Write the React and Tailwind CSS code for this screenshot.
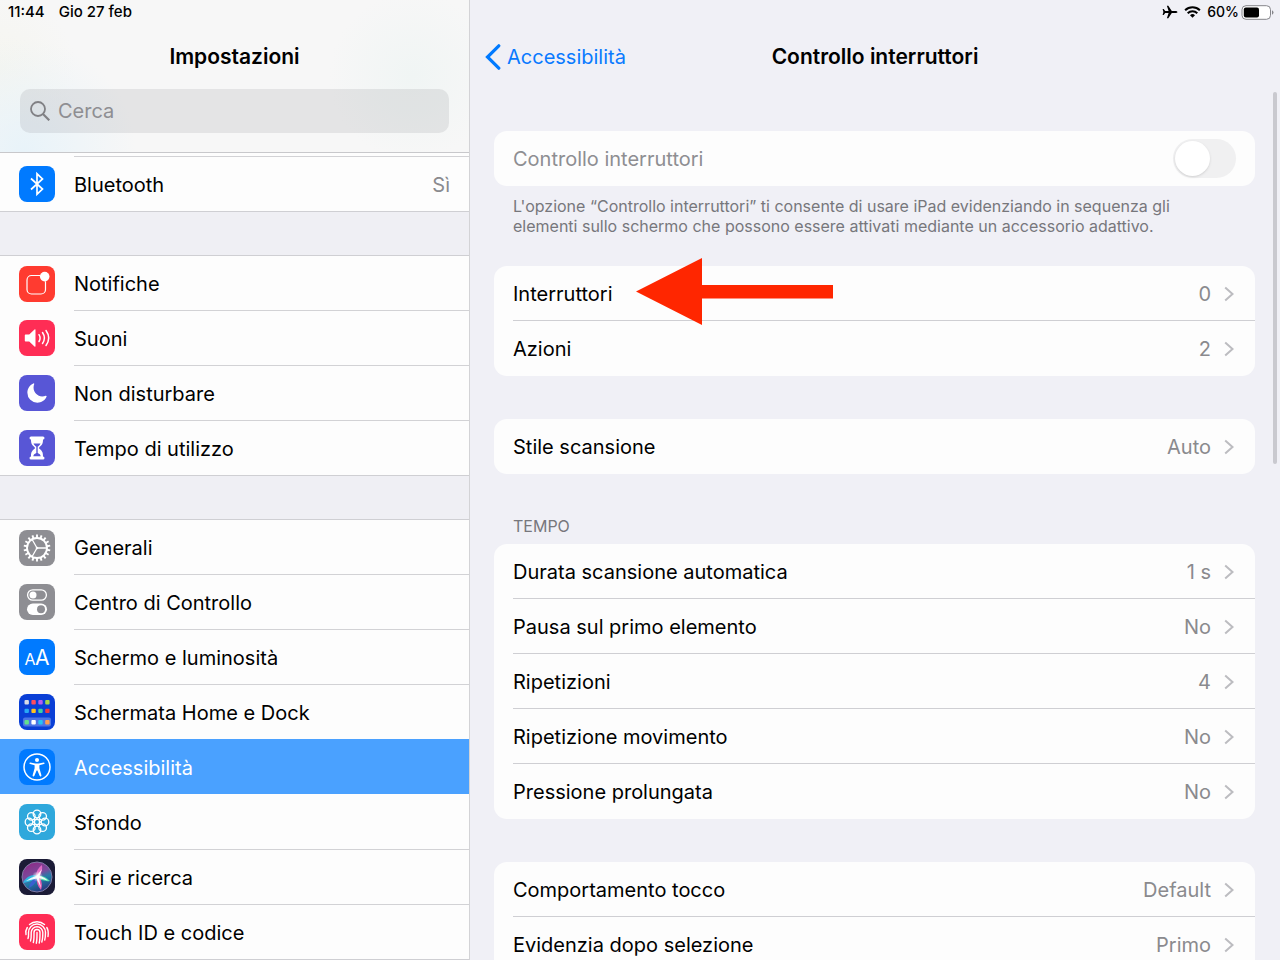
import { IoMoon } from 'react-icons/io5'

const gearTeeth = Array.from({ length: 18 }, (_, i) => i * 20)
const petals = Array.from({ length: 8 }, (_, i) => (i * Math.PI) / 4)

function Tile({ className, children }) {
    return (
        <svg viewBox="0 0 36 36" className={`size-9 shrink-0 rounded-lg ${className}`} aria-hidden="true">
            {children}
        </svg>
    )
}

function BluetoothIcon() {
    return (
        <Tile className="bg-[#007aff]">
            <path d="M12 12.5 23.5 23 18 28.2V7.8L23.5 13 12 23.5" fill="none" stroke="#fff" strokeWidth="1.7" />
        </Tile>
    )
}

function NotificationsIcon() {
    return (
        <Tile className="bg-[#ff3b30]">
            <path
                d="M21.3 9.5H12.5A4.5 4.5 0 0 0 8 14v9.5A4.5 4.5 0 0 0 12.5 28H22a4.5 4.5 0 0 0 4.5-4.5v-8.3"
                fill="none"
                stroke="#fff"
                strokeWidth="1.2"
            />
            <circle cx="25.7" cy="10.6" r="4.8" fill="#fff" />
        </Tile>
    )
}

function SoundsIcon() {
    return (
        <Tile className="bg-[#ff2d55]">
            <path d="M6.5 14.5h3.7l5.3-5q1-.8 1 .5v16q0 1.3-1 .5l-5.3-5H6.5q-.7 0-.7-.8v-5.4q0-.8.7-.8z" fill="#fff" />
            <g fill="none" stroke="#fff" strokeWidth="1.5" strokeLinecap="round">
                <path d="M20 14.700q2.200 3.400 0 6.800" />
                <path d="M23.500 12.500q3.800 5.500 0 11" />
                <path d="M27 10.500q5.400 7.500 0 15" />
            </g>
        </Tile>
    )
}

function DoNotDisturbIcon() {
    return (
        <Tile className="bg-[#5856d6]">
            <IoMoon x="7" y="7" size={22} color="#fff" />
        </Tile>
    )
}

function ScreenTimeIcon() {
    return (
        <Tile className="bg-[#5856d6]">
            <path
                d="M12 6.5h12q1.5 0 1.5 1.5t-1.5 1.6c0 4-.7 5.4-3.6 7.7q-.8.7 0 1.4c2.9 2.3 3.6 3.7 3.6 7.7q1.5.1 1.5 1.6t-1.5 1.5H12q-1.500 0-1.500-1.500t1.500-1.600c0-4 .7-5.400 3.600-7.700q.8-.7 0-1.400C12.700 15 12 13.600 12 9.600q-1.500-.1-1.500-1.600T12 6.500z"
                fill="#fff"
            />
            <path d="M14.500 13.500h7c-.6 1.400-1.500 2-2.800 3.200v6.300c2 .9 2.600 1.500 3 3.200h-7.400c.4-1.700 1-2.300 3-3.200v-6.300c-1.300-1.200-2.200-1.800-2.800-3.200z" fill="#5856d6" />
        </Tile>
    )
}

function GeneralIcon() {
    return (
        <Tile className="bg-[#8e8e93]">
            <g stroke="#fff" fill="none">
                {gearTeeth.map((angle) => (
                    <path key={angle} d="M18 4.600v3.400" strokeWidth="1.9" transform={`rotate(${angle} 18 18)`} />
                ))}
                <circle cx="18" cy="18" r="10" strokeWidth="1.9" />
                <path d="M18 18h10M18 18l-5-8.700M18 18l-5 8.700" strokeWidth="1.3" />
            </g>
            <circle cx="18" cy="18" r="1.3" fill="#fff" />
        </Tile>
    )
}

function ControlCenterIcon() {
    return (
        <Tile className="bg-[#8e8e93]">
            <rect x="8.6" y="5.8" width="18.8" height="10.4" rx="5.2" fill="none" stroke="#fff" strokeWidth="1.3" />
            <circle cx="14" cy="11" r="3.5" fill="#fff" />
            <rect x="8" y="19.5" width="20" height="11.5" rx="5.75" fill="#fff" />
            <circle cx="22" cy="25.2" r="4" fill="#8e8e93" />
        </Tile>
    )
}

function DisplayIcon() {
    return (
        <Tile className="bg-[#007aff]">
            <text x="5.5" y="25.5" fontSize="16" fill="#fff" className="font-[Inter]">A</text>
            <text x="16" y="25.5" fontSize="21" fill="#fff" className="font-[Inter]">A</text>
        </Tile>
    )
}

function HomeScreenIcon() {
    const apps = [
        ['#d9dbe6', '#ff4d5e', '#b85cf0', '#a6d84a'],
        ['#28a8f5', '#ffc21f', '#3fd0a0', '#f03a3f'],
        ['#62e08c', '#ffffff', '#27c3f3', '#ff9d50'],
    ]
    return (
        <Tile className="bg-[#0a3fd6]">
            <rect x="4" y="23.5" width="28" height="9" rx="2" fill="#4c74e4" />
            {apps.map((line, row) =>
                line.map((color, col) => (
                    <rect
                        key={color}
                        x={5.5 + col * 6.9}
                        y={[6, 14.7, 26][row]}
                        width="4.4"
                        height="4.4"
                        rx="1"
                        fill={color}
                    />
                ))
            )}
        </Tile>
    )
}

function AccessibilityIcon() {
    return (
        <Tile className="bg-[#007aff]">
            <circle cx="18" cy="18" r="13" fill="none" stroke="#fff" strokeWidth="1.5" />
            <circle cx="18" cy="11" r="2" fill="#fff" />
            <path
                d="M11.3 13.5l5 .9h3.4l5-.9q.9 0 .9.7t-.7.8l-4.5 1.200v3l2 7q.2 1-.6 1.200t-1.200-.7L18.400 21.500h-.8l-2.200 5.200q-.4.900-1.200.7t-.6-1.200l2-7v-3L11.100 15q-.7-.1-.7-.8t.9-.7z"
                fill="#fff"
            />
        </Tile>
    )
}

function WallpaperIcon() {
    return (
        <Tile className="bg-[#2fa8dc]">
            <g fill="none" stroke="#fff" strokeWidth="1.3">
                {petals.map((angle) => (
                    <circle key={angle} cx={18 + 8 * Math.cos(angle)} cy={18 + 8 * Math.sin(angle)} r="3.8" />
                ))}
                {petals.map((angle) => (
                    <path
                        key={angle}
                        d={`M${18 + 2.6 * Math.cos(angle)} ${18 + 2.6 * Math.sin(angle)}L${18 + 4.4 * Math.cos(angle)} ${18 + 4.4 * Math.sin(angle)}`}
                    />
                ))}
                <circle cx="18" cy="18" r="2.6" />
            </g>
        </Tile>
    )
}

function SiriIcon() {
    return (
        <Tile className="bg-[#1b1b36]">
            <defs>
                <linearGradient id="siri" x1="0.3" y1="0" x2="0.7" y2="1">
                    <stop offset="0" stopColor="#8e2a86" />
                    <stop offset="0.4" stopColor="#7a4a9c" />
                    <stop offset="0.6" stopColor="#1f7fa8" />
                    <stop offset="1" stopColor="#27307a" />
                </linearGradient>
                <radialGradient id="glow">
                    <stop offset="0" stopColor="#fff" />
                    <stop offset="1" stopColor="#fff" stopOpacity="0" />
                </radialGradient>
            </defs>
            <circle cx="18" cy="18" r="15" fill="url(#siri)" stroke="#7f7aa6" strokeWidth="1" />
            <path d="M18 16Q8 15 4 24q8-1 14-5z" fill="#2fb6e0" />
            <path d="M18 17q7-1 13 5-6 1-13-3z" fill="#4fe0b0" />
            <path d="M18 18q-1 8 4 13 2-6-1-13z" fill="#e85cb0" />
            <path d="M18 18q-8 5-8 11 6-3 9-10z" fill="#3a5fd0" />
            <path d="M17 18q0-8 6-12 1 6-3 12z" fill="#e06ac4" />
            <circle cx="18.5" cy="17.5" r="5.5" fill="url(#glow)" />
            <path d="M7 22q5-4 10.500-5L23 10l-2.500 7Q26 18 28.500 21.500L20 19l2 10-4.500-9.500z" fill="#fff" opacity=".9" />
        </Tile>
    )
}

function TouchIdIcon() {
    return (
        <Tile className="bg-[#ff2d55]">
            <g fill="none" stroke="#fff" strokeWidth="1.4" strokeLinecap="round">
                <path d="M10.500 10.500a11.500 11.500 0 0 1 15 0" />
                <path d="M7 20.500c-.6-2 0-5 1.300-7M27.800 13.500c1.400 2.200 1.700 5.500 1.200 9" />
                <path d="M9 24.500c.8-1.800.5-4 .5-6a8.500 8.500 0 0 1 17 0c0 2.800 0 5-.8 7.500" />
                <path d="M11.500 27c1-2.500.7-5.700.7-8.500a5.800 5.800 0 0 1 11.600 0c0 3.500 0 6.500-1 9.500" />
                <path d="M14.300 28.500c.9-3 .7-6.800.7-10a3 3 0 0 1 6 0c0 4 0 7.500-.8 10.500" />
                <path d="M18 18.500c0 4 .1 7.500-.7 10.700" />
            </g>
        </Tile>
    )
}

function PlaneIcon() {
    return (
        <svg viewBox="0 0 16 14" className="h-3.5 w-4" aria-hidden="true">
            <path d="M15.500 7c0-.7-1.200-1.100-2.200-1.100H9.800L6.300.8H4.900l1.700 5.100H3.200L1.700 4H.6l.8 3-.8 3h1.100l1.500-1.900h3.400l-1.700 5.100h1.400l3.500-5.100h3.500c1 0 2.200-.4 2.200-1.100z" />
        </svg>
    )
}

function WifiIcon() {
    return (
        <svg viewBox="0 0 18 13" className="h-3 w-[17px]" fill="none" stroke="#000" strokeWidth="2.2" aria-hidden="true">
            <path d="M1 4.700a11.500 11.500 0 0 1 16 0M3.800 7.800a7.500 7.500 0 0 1 10.400 0" />
            <path d="M9 12.700 6.300 10a3.900 3.900 0 0 1 5.400 0z" fill="#000" stroke="none" />
        </svg>
    )
}

function BatteryIcon() {
    return (
        <svg viewBox="0 0 33 15" className="h-[15px] w-[33px]" aria-hidden="true">
            <rect x="1" y=".7" width="28.5" height="13.6" rx="4" fill="#fff" stroke="#85858a" strokeWidth="1" />
            <rect x="2.8" y="2.5" width="15.2" height="10" rx="2" fill="#000" />
            <path d="M31 5.200q1.500.8 1.500 2.300T31 9.800z" fill="#85858a" />
        </svg>
    )
}

function Chevron() {
    return (
        <svg viewBox="0 0 10 16" className="h-4 w-2.5 shrink-0" fill="none" stroke="#bcbcc0" strokeWidth="2" aria-hidden="true">
            <path d="M1.200 1.500 8.500 8l-7.300 6.500" />
        </svg>
    )
}

function RedArrow() {
    return (
        <svg viewBox="0 0 197 67" className="absolute -top-2 left-[142px] w-[197px]" aria-hidden="true">
            <path d="M0 33.500 66 0v27h131v13.500H66V67z" fill="#ff2600" />
        </svg>
    )
}

const bluetoothGroup = [{ label: 'Bluetooth', value: 'Sì', Icon: BluetoothIcon, inset: true }]

const alertsGroup = [
    { label: 'Notifiche', Icon: NotificationsIcon },
    { label: 'Suoni', Icon: SoundsIcon },
    { label: 'Non disturbare', Icon: DoNotDisturbIcon },
    { label: 'Tempo di utilizzo', Icon: ScreenTimeIcon },
]

const systemGroup = [
    { label: 'Generali', Icon: GeneralIcon },
    { label: 'Centro di Controllo', Icon: ControlCenterIcon },
    { label: 'Schermo e luminosità', Icon: DisplayIcon },
    { label: 'Schermata Home e Dock', Icon: HomeScreenIcon },
    { label: 'Accessibilità', Icon: AccessibilityIcon, selected: true },
    { label: 'Sfondo', Icon: WallpaperIcon, noLine: true },
    { label: 'Siri e ricerca', Icon: SiriIcon },
    { label: 'Touch ID e codice', Icon: TouchIdIcon },
]

function SidebarGroup({ items }) {
    return (
        <ul className="border-b border-[#cfcfd3] bg-[#fdfdfd]">
            {items.map(({ label, value, Icon, selected, noLine, inset }, i) => {
                const fullLine = i === 0 && !inset
                return (
                    <li key={label} className={fullLine ? 'border-t border-[#cfcfd3]' : ''}>
                        <a
                            href="#"
                            aria-current={selected ? 'page' : undefined}
                            className={`flex items-stretch gap-[19px] pl-[19px] ${fullLine ? 'h-[54px]' : 'h-[55px]'} ${selected ? 'bg-[#4aa1ff] text-white' : 'text-black'}`}
                        >
                            <span className="flex items-center pt-px">
                                <Icon />
                            </span>
                            <span
                                className={`flex flex-1 items-center justify-between pr-[19px] ${fullLine ? 'pt-px' : 'border-t pt-0.5'} ${selected || noLine ? 'border-transparent' : 'border-[#d2d2d5]'}`}
                            >
                                {label}
                                {value && <span className="text-[#8a8a8e]">{value}</span>}
                            </span>
                        </a>
                    </li>
                )
            })}
        </ul>
    )
}

function Sidebar() {
    return (
        <aside className="flex w-[470px] shrink-0 flex-col overflow-hidden border-r border-[#d3d3d6]">
            <header className="h-[153px] shrink-0 border-b border-[#c8c8cb] bg-[#f7f7f7] bg-[radial-gradient(circle_at_5%_100%,#e8f3f9_0%,transparent_24%),radial-gradient(circle_at_0%_45%,#f5f5ef_0%,transparent_16%),radial-gradient(circle_at_88%_50%,#f0f5f4_0%,transparent_20%)]">
                <div className="flex h-6 items-center gap-3.5 pl-2 text-[15px] font-medium">
                    <span>11:44</span>
                    <span>Gio 27 feb</span>
                </div>
                <h1 className="flex h-[65px] items-center justify-center text-[21px] font-semibold">Impostazioni</h1>
                <label className="mx-5 flex h-11 items-center gap-2 rounded-[10px] bg-[#767680]/15 px-2.5">
                    <svg viewBox="0 0 20 20" className="size-5" fill="none" stroke="#808084" strokeWidth="1.8" aria-hidden="true">
                        <circle cx="8" cy="8" r="7" />
                        <path d="m13 13 6.300 6.300" strokeWidth="2.2" />
                    </svg>
                    <input
                        type="search"
                        aria-label="Cerca"
                        placeholder="Cerca"
                        className="min-w-0 flex-1 bg-transparent outline-none placeholder:text-[#8e8e92]"
                    />
                </label>
            </header>
            <nav className="flex flex-col gap-[43px] bg-[#efeff4]">
                <div className="bg-[#fdfdfd] pt-[3px]">
                    <SidebarGroup items={bluetoothGroup} />
                </div>
                <SidebarGroup items={alertsGroup} />
                <SidebarGroup items={systemGroup} />
            </nav>
        </aside>
    )
}

const timing = [
    { label: 'Durata scansione automatica', value: '1 s' },
    { label: 'Pausa sul primo elemento', value: 'No' },
    { label: 'Ripetizioni', value: '4' },
    { label: 'Ripetizione movimento', value: 'No' },
    { label: 'Pressione prolungata', value: 'No' },
]

function Card({ items }) {
    return (
        <ul className="rounded-[13px] bg-[#fdfdfd]">
            {items.map(({ label, value, arrow }, i) => (
                <li key={label} className="relative pl-[19px]">
                    <button
                        type="button"
                        className={`flex h-[55px] w-full items-center border-b pt-px pr-[21px] text-left ${i < items.length - 1 ? 'border-[#cfcfd3]' : 'border-transparent'}`}
                    >
                        <span className="flex-1">{label}</span>
                        <span className="mr-[13px] text-[#8a8a8e]">{value}</span>
                        <Chevron />
                    </button>
                    {arrow && <RedArrow />}
                </li>
            ))}
        </ul>
    )
}

export default function App() {
    return (
        <div className="flex h-screen overflow-hidden bg-[#f0f0f6] font-[Inter,sans-serif] text-[20px] text-black">
            <Sidebar />
            <main className="relative flex-1 overflow-hidden">
                <div className="flex h-6 items-center justify-end gap-1.5 pr-1.5 text-sm font-medium">
                    <PlaneIcon />
                    <WifiIcon />
                    <span className="flex items-center gap-0.5">
                        60%
                        <BatteryIcon />
                    </span>
                </div>
                <header className="grid h-[65px] grid-cols-[1fr_auto_1fr] items-center px-[15px]">
                    <a href="#" className="flex items-center gap-1.5 text-[#0a7aff]">
                        <svg viewBox="0 0 16 26" className="h-[26px] w-4" fill="none" stroke="#007aff" strokeWidth="3.2" strokeLinecap="round" aria-hidden="true">
                            <path d="M13.800 1.800 2.500 13l11.300 11.200" />
                        </svg>
                        Accessibilità
                    </a>
                    <h2 className="text-[21px] font-semibold">Controllo interruttori</h2>
                </header>

                <div className="pt-[42px] pr-[25px] pl-6">
                    <label className="flex h-[55px] items-center justify-between rounded-[13px] bg-[#fdfdfd] px-[19px] text-[#8e8e92]">
                        Controllo interruttori
                        <input
                            type="checkbox"
                            role="switch"
                            disabled
                            className="h-[39px] w-[63px] appearance-none rounded-full bg-[#f0f0f1] p-0.5 before:block before:size-[35px] before:rounded-full before:bg-white before:shadow-sm"
                        />
                    </label>
                    <p className="h-20 px-[19px] pt-2.5 text-base leading-5 text-[#77777c]">
                        L'opzione “Controllo interruttori” ti consente di usare iPad evidenziando in sequenza gli elementi sullo schermo che possono essere attivati mediante un accessorio adattivo.
                    </p>
                    <Card
                        items={[
                            { label: 'Interruttori', value: '0', arrow: true },
                            { label: 'Azioni', value: '2' },
                        ]}
                    />
                    <div className="mt-[43px]">
                        <Card items={[{ label: 'Stile scansione', value: 'Auto' }]} />
                    </div>
                    <h3 className="px-[19px] pt-[42px] pb-2 text-base leading-5 text-[#77777c]">TEMPO</h3>
                    <Card items={timing} />
                    <div className="mt-[43px]">
                        <Card
                            items={[
                                { label: 'Comportamento tocco', value: 'Default' },
                                { label: 'Evidenzia dopo selezione', value: 'Primo' },
                            ]}
                        />
                    </div>
                </div>
                <div className="absolute top-[92px] right-[3px] h-[372px] w-1 rounded-full bg-[#c9c9cf]" />
            </main>
        </div>
    )
}
